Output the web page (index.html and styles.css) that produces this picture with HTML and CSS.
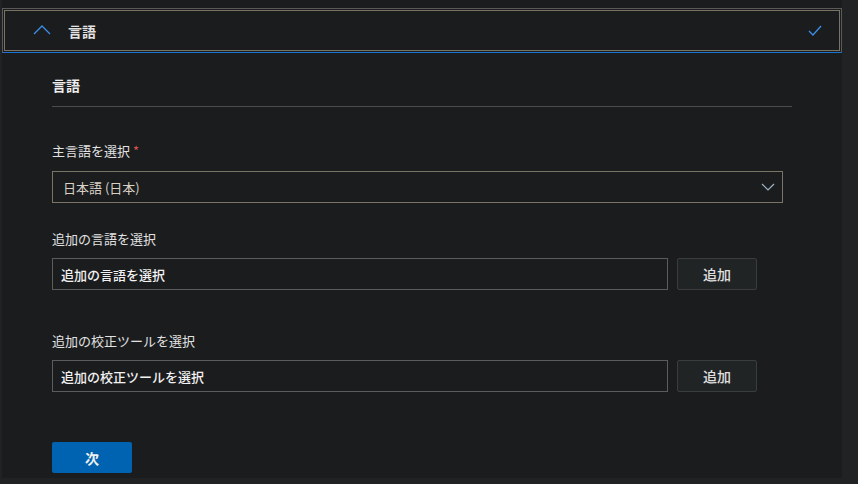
FILE: index.html
```html
<!DOCTYPE html>
<html lang="ja">
<head>
<meta charset="utf-8">
<link rel="stylesheet" href="styles.css">
</head>
<body>
<div class="panel">
  <div class="acc">
    <div class="acc-inner">
      <svg class="chev-up" width="18" height="10" viewBox="0 0 18 10"><path d="M1 9 L9 1 L17 9" fill="none" stroke="#3b8fe8" stroke-width="1.3"/></svg>
      <span class="acc-title">言語</span>
      <svg class="check" width="14" height="11" viewBox="0 0 14 11"><path d="M1 6 L5 10 L13 1" fill="none" stroke="#3b8fe8" stroke-width="1.3"/></svg>
    </div>
  </div>
  <div class="content">
    <div class="section-title">言語</div>
    <div class="label l1">主言語を選択 <span class="req">*</span></div>
    <div class="select">
      <span>日本語 (日本)</span>
      <svg width="14" height="8" viewBox="0 0 14 8"><path d="M1 1 L7 7 L13 1" fill="none" stroke="#9fb3c4" stroke-width="1.2"/></svg>
    </div>
    <div class="label l2">追加の言語を選択</div>
    <div class="row">
      <div class="input">追加の言語を選択</div>
      <button class="btn">追加</button>
    </div>
    <div class="label l3">追加の校正ツールを選択</div>
    <div class="row">
      <div class="input">追加の校正ツールを選択</div>
      <button class="btn">追加</button>
    </div>
    <button class="primary">次</button>
  </div>
</div>
</body>
</html>
```
FILE: styles.css
```css
html, body {
  margin: 0;
  padding: 0;
  background: #202224;
  font-family: "Noto Sans CJK JP", "Noto Sans", sans-serif;
  color: #e6e6e6;
}
.panel {
  margin-left: 2px;
  width: 840px;
  height: 478px;
  background: #1b1c1e;
  display: flex;
  flex-direction: column;
  padding-top: 8px;
  box-sizing: border-box;
}
.acc {
  border: 1px solid #5a5a5a;
  border-bottom: 1px solid #1a73d1;
  padding: 1px;
  width: 840px;
  box-sizing: border-box;
}
.acc-inner {
  border: 1px solid #7a7263;
  height: 39px;
  display: flex;
  align-items: center;
  padding: 0 17px 0 28px;
}
.chev-up { margin-top: -2px; }
.acc-title {
  margin-left: 17px;
  font-size: 14px;
  font-weight: 700;
  color: #e2e2e2;
  flex: 1;
}
.content {
  padding-left: 50px;
  display: flex;
  flex-direction: column;
  align-items: flex-start;
}
.section-title {
  margin-top: 22px;
  width: 740px;
  font-size: 14px;
  font-weight: 700;
  line-height: 20px;
  padding-bottom: 11px;
  border-bottom: 1px solid #4c4c4c;
  color: #ececec;
}
.label {
  font-size: 13px;
  line-height: 18px;
  color: #e2e2e2;
}
.l1 { margin-top: 35px; }
.l2 { margin-top: 27px; }
.l3 { margin-top: 42px; }
.req { color: #d9534f; }
.select {
  margin-top: 11px;
  width: 731px;
  height: 32px;
  box-sizing: border-box;
  border: 1px solid #7a7366;
  display: flex;
  align-items: center;
  justify-content: space-between;
  padding: 0 7px 0 10px;
  font-size: 13px;
  color: #d8d2c6;
}
.row {
  margin-top: 10px;
  display: flex;
  gap: 9px;
}
.input {
  width: 616px;
  height: 32px;
  box-sizing: border-box;
  border: 1px solid #5c5c5c;
  padding: 0 8px;
  display: flex;
  align-items: center;
  font-size: 13px;
  font-weight: 500;
  color: #f2f2f2;
}
.btn {
  width: 80px;
  height: 32px;
  box-sizing: border-box;
  background: #212425;
  border: 1px solid #3a3c3e;
  border-radius: 2px;
  font-family: inherit;
  font-size: 14px;
  font-weight: 500;
  color: #e0e0e0;
  padding: 0;
}
.primary {
  margin-top: 50px;
  width: 80px;
  height: 31px;
  background: #0063b1;
  border: none;
  border-radius: 2px;
  font-family: inherit;
  font-size: 14px;
  font-weight: 700;
  color: #f0f0f0;
  padding: 0;
}
```
